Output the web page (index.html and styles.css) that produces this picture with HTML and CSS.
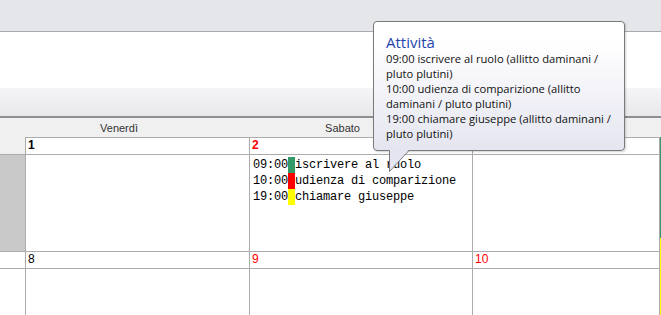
FILE: index.html
```html
<!DOCTYPE html>
<html>
<head>
<meta charset="utf-8">
<link rel="stylesheet" href="styles.css">
</head>
<body>
<div class="page">
  <div class="topbar"></div>
  <div class="blank"></div>
  <div class="band"></div>
  <div class="head">
    <div class="hcell">Venerdì</div>
    <div class="hcell">Sabato</div>
    <div class="hcell"></div>
  </div>
  <div class="grid">
    <div class="strip"></div>

    <div class="side side-date"></div>
    <div class="cell date bold">1</div>
    <div class="cell date bold red">2</div>
    <div class="cell date bold red"></div>

    <div class="side side-gray"></div>
    <div class="cell"></div>
    <div class="cell events">
      <div class="ev"><span class="t">09:00</span><span class="bar green"></span><span>iscrivere al ruolo</span></div>
      <div class="ev"><span class="t">10:00</span><span class="bar redbar"></span><span>udienza di comparizione</span></div>
      <div class="ev"><span class="t">19:00</span><span class="bar yellow"></span><span>chiamare giuseppe</span></div>
    </div>
    <div class="cell"></div>

    <div class="side side-line"></div>
    <div class="cell date">8</div>
    <div class="cell date red">9</div>
    <div class="cell date red">10</div>

    <div class="side side-line"></div>
    <div class="cell"></div>
    <div class="cell"></div>
    <div class="cell"></div>
  </div>

  <div class="tip">
    <div class="tip-title">Attività</div>
    <div class="tip-line">09:00 iscrivere al ruolo (allitto daminani /</div>
    <div class="tip-line">pluto plutini)</div>
    <div class="tip-line">10:00 udienza di comparizione (allitto</div>
    <div class="tip-line">daminani / pluto plutini)</div>
    <div class="tip-line">19:00 chiamare giuseppe (allitto daminani /</div>
    <div class="tip-line">pluto plutini)</div>
  </div>
  <svg class="tail" width="24" height="24" viewBox="0 0 24 24">
    <polygon points="1.5,0 20.5,0 1.5,21.5" fill="#e4e5f0"/>
    <polyline points="1.5,0.5 1.5,21.5 20.5,1" fill="none" stroke="#7a7a7a" stroke-width="1"/>
  </svg>
</div>
</body>
</html>
```
FILE: styles.css
```css
html, body {
  margin: 0;
  padding: 0;
  background: #ffffff;
}
.page {
  position: relative;
  width: 661px;
  height: 315px;
  overflow: hidden;
  font-family: "Liberation Sans", Arial, sans-serif;
}
.topbar {
  height: 31px;
  background: #e5e6e9;
  border-bottom: 1px solid #a9a9ab;
}
.blank {
  height: 56px;
  background: #ffffff;
}
.band {
  height: 28px;
  background: linear-gradient(#f5f5f7, #e8e8eb);
  border-bottom: 2px solid #8e8e90;
}
.head {
  height: 19px;
  background: #f0f0f0;
  display: grid;
  grid-template-columns: 224px 223px 187px;
  padding-left: 7px;
  align-items: center;
}
.hcell {
  text-align: center;
  font-size: 11px;
  color: #333333;
}
.grid {
  display: grid;
  grid-template-columns: 25px 224px 223px 187px 2px;
  grid-template-rows: 17px 97px 17px 60px;
}
.side {
  border-top: 1px solid #acacac;
}
.side-date {
  background: #f0f0f0;
  border-top: none;
}
.side-gray {
  background: #c9c9c9;
}
.side-line {
  background: #ffffff;
}
.cell {
  border-top: 1px solid #acacac;
  border-left: 1px solid #acacac;
  background: #ffffff;
}
.date {
  font-size: 12px;
  line-height: 15px;
  padding-left: 2px;
  color: #000000;
}
.bold {
  font-weight: bold;
}
.red {
  color: #ff0000;
}
.strip {
  grid-column: 5;
  grid-row: 1 / 5;
  background:
    linear-gradient(to right, #acacac 0, #acacac 1px, transparent 1px),
    linear-gradient(#339966 0, #339966 101px, #ffff00 101px);
}
.events {
  padding-top: 2px;
  padding-left: 3px;
  font-family: "Liberation Mono", "Courier New", monospace;
  font-size: 12px;
  letter-spacing: -0.2px;
  color: #000000;
}
.ev {
  display: flex;
  align-items: center;
  height: 16px;
  white-space: nowrap;
}
.bar {
  width: 7px;
  height: 16px;
  flex: none;
}
.green { background: #339966; }
.redbar { background: #ff0000; }
.yellow { background: #ffff00; }

.tip {
  position: absolute;
  left: 373px;
  top: 21px;
  width: 238px;
  height: 116px;
  padding: 12px 0 0 12px;
  border: 1px solid #7a7a7a;
  border-radius: 4px;
  background: linear-gradient(#ffffff 0, #ffffff 20px, #e4e5f0 100%);
  box-shadow: 1px 1px 2px rgba(0, 0, 0, 0.18);
  font-family: "Open Sans", sans-serif;
  white-space: nowrap;
}
.tip-title {
  font-size: 15px;
  line-height: 17px;
  color: #1f45ad;
}
.tip-line {
  font-size: 11.2px;
  line-height: 15px;
  color: #111111;
}
.tail {
  position: absolute;
  left: 388px;
  top: 150px;
}
```
